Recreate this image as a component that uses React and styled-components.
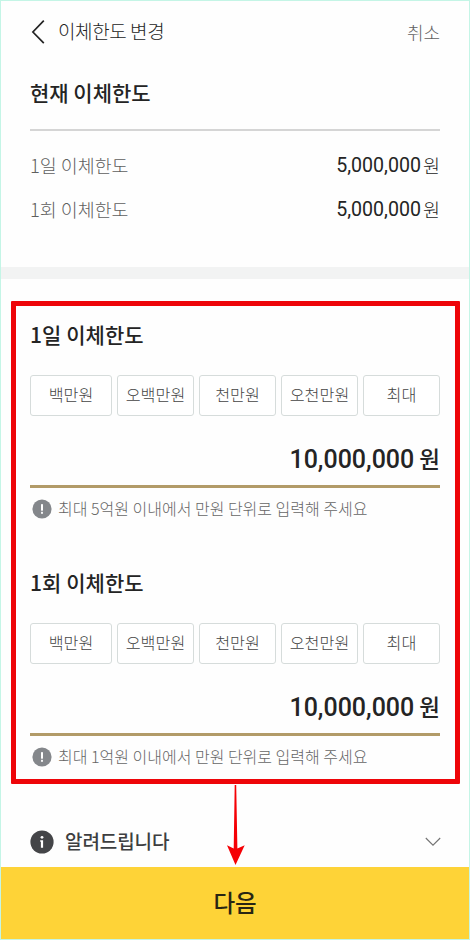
import React from "react";
import styled, { createGlobalStyle } from "styled-components";

const GlobalStyle = createGlobalStyle`
  *, *::before, *::after { box-sizing: border-box; }
  body { margin: 0; background: #fefefe; }
  button { font: inherit; color: inherit; background: none; border: 0; padding: 0; cursor: pointer; }
  h2, p { margin: 0; }
`;

const Screen = styled.main`
  position: relative;
  display: flex;
  flex-direction: column;
  width: 470px;
  height: 940px;
  overflow: hidden;
  border: 1px solid #c4f5e6;
  background: #fefefe;
  color: #242424;
  font-family: "Noto Sans CJK KR", sans-serif;
  white-space: nowrap;
`;

const Header = styled.header`
  display: flex;
  align-items: center;
  height: 62px;
  padding: 0 29px;
`;

const BackButton = styled.button`
  display: flex;
  width: 28px;
  height: 28px;
`;

const HeaderTitle = styled.span`
  flex: 1;
  padding-bottom: 2px;
  font-size: 19px;
  font-weight: 300;
  letter-spacing: -0.4px;
  line-height: 28px;
`;

const CancelButton = styled.button`
  font-size: 18px;
  font-weight: 300;
  color: #606060;
`;

const Summary = styled.section`
  height: 204px;
  padding: 0 29px;
`;

const SectionTitle = styled.h2`
  height: ${(p) => p.$height}px;
  font-size: 21px;
  font-weight: 500;
  letter-spacing: ${(p) => p.$spacing || 0}px;
  line-height: ${(p) => p.$line}px;
`;

const SummaryList = styled.div`
  padding-top: 12px;
  border-top: 2px solid #d5d5d5;
`;

const SummaryRow = styled.div`
  display: flex;
  justify-content: space-between;
  align-items: center;
  height: 44px;
  font-weight: 300;
`;

const SummaryLabel = styled.span`
  color: #5f5f5f;
  font-size: 18.4px;
`;

const SummaryValue = styled.span`
  display: flex;
  align-items: center;
  gap: 2px;
  font-size: 18.5px;
`;

const Digits = styled.span`
  font-family: Roboto, sans-serif;
  font-size: ${(p) => p.$size}px;
  font-weight: ${(p) => p.$weight};
`;

const Divider = styled.div`
  height: 12px;
  background: #f2f3f3;
`;

const LimitFrame = styled.section`
  width: 449px;
  height: 483px;
  margin: 22px 0 0 10px;
  padding: 0 15px 0 14px;
  border: 5px solid #ee0509;
  border-radius: 1px;
`;

const LimitBlock = styled.div`
  height: 248px;
`;

const PresetRow = styled.div`
  display: grid;
  grid-template-columns: 82px repeat(4, 77px);
  gap: 5px;
`;

const Preset = styled.button`
  height: 41px;
  padding-bottom: 3px;
  border: 1px solid #d6dcdb;
  border-radius: 3px;
  background: #fff;
  color: #454545;
  font-size: 16.2px;
  font-weight: 300;
`;

const Amount = styled.div`
  display: flex;
  justify-content: flex-end;
  align-items: center;
  gap: 5px;
  height: 72px;
  padding-top: 18px;
  border-bottom: 3px solid #b29b68;
`;

const Unit = styled.span`
  padding-bottom: 4px;
  font-size: 22.5px;
  font-weight: 500;
`;

const Note = styled.p`
  display: flex;
  align-items: center;
  gap: 6px;
  height: 42px;
  padding-left: 2px;
  color: #666;
  font-size: 16px;
  font-weight: 300;
`;

const NoteText = styled.span`
  padding-bottom: 3px;
`;

const NoticeRow = styled.div`
  display: flex;
  align-items: center;
  flex: 1;
  padding: 32px 28px 0 29px;
`;

const NoticeText = styled.span`
  flex: 1;
  padding: 0 0 2px 11px;
  color: #3d3e40;
  font-size: 19px;
  font-weight: 500;
  letter-spacing: -0.1px;
`;

const NextButton = styled.button`
  height: 72px;
  padding-bottom: 3px;
  background: #fed337;
  color: #292513;
  font-size: 23.5px;
  font-weight: 500;
`;

const Arrow = styled.svg`
  position: absolute;
  left: 224px;
  top: 783px;
`;

function AlertIcon() {
  return (
    <svg width="20" height="20" viewBox="0 0 20 20">
      <circle cx="10" cy="10" r="9.6" fill="#84878b" />
      <rect x="9" y="5" width="2" height="6.7" rx=".4" fill="#fff" />
      <rect x="9" y="12.8" width="2" height="2" rx=".4" fill="#fff" />
    </svg>
  );
}

const PRESETS = ["백만원", "오백만원", "천만원", "오천만원", "최대"];

function Limit({ title, amount, note }) {
  return (
    <LimitBlock>
      <SectionTitle $height={69} $line={56} $spacing={0.05}>{title}</SectionTitle>
      <PresetRow>
        {PRESETS.map((label) => <Preset key={label}>{label}</Preset>)}
      </PresetRow>
      <Amount>
        <Digits $size={25} $weight={500}>{amount}</Digits>
        <Unit>원</Unit>
      </Amount>
      <Note>
        <AlertIcon />
        <NoteText>{note}</NoteText>
      </Note>
    </LimitBlock>
  );
}

export default function App() {
  return (
    <Screen>
      <GlobalStyle />
      <Header>
        <BackButton aria-label="뒤로">
          <svg width="28" height="28" viewBox="0 0 28 28" fill="none">
            <path d="M13.8 2.7 2.9 14l10.9 11.2" stroke="#242424" strokeWidth="1.7" />
          </svg>
        </BackButton>
        <HeaderTitle>이체한도 변경</HeaderTitle>
        <CancelButton>취소</CancelButton>
      </Header>
      <Summary>
        <SectionTitle $height={66} $line={58}>현재 이체한도</SectionTitle>
        <SummaryList>
          {["1일 이체한도", "1회 이체한도"].map((label) => (
            <SummaryRow key={label}>
              <SummaryLabel>{label}</SummaryLabel>
              <SummaryValue>
                <Digits $size={19.6} $weight={400}>5,000,000</Digits>
                <span>원</span>
              </SummaryValue>
            </SummaryRow>
          ))}
        </SummaryList>
      </Summary>
      <Divider />
      <LimitFrame>
        <Limit title="1일 이체한도" amount="10,000,000" note="최대 5억원 이내에서 만원 단위로 입력해 주세요" />
        <Limit title="1회 이체한도" amount="10,000,000" note="최대 1억원 이내에서 만원 단위로 입력해 주세요" />
      </LimitFrame>
      <NoticeRow>
        <svg width="24" height="24" viewBox="0 0 24 24">
          <circle cx="12" cy="12" r="11.6" fill="#444548" />
          <circle cx="12" cy="7.3" r="1.4" fill="#fff" />
          <path d="M10.2 10.2h2.9v7.6h-2.2v-6.1h-.7z" fill="#fff" />
        </svg>
        <NoticeText>알려드립니다</NoticeText>
        <svg width="16" height="10" viewBox="0 0 16 10" fill="none">
          <path d="m.8 1 7.2 7.2L15.2 1" stroke="#737373" strokeWidth="1.1" />
        </svg>
      </NoticeRow>
      <NextButton>다음</NextButton>
      <Arrow width="22" height="82" viewBox="0 0 22 82">
        <path d="M9.7 1h1.5l1.2 63.5 7.3-3.2L10.5 81 2 61.3l6.7 3.2z" fill="#f50005" />
      </Arrow>
    </Screen>
  );
}
